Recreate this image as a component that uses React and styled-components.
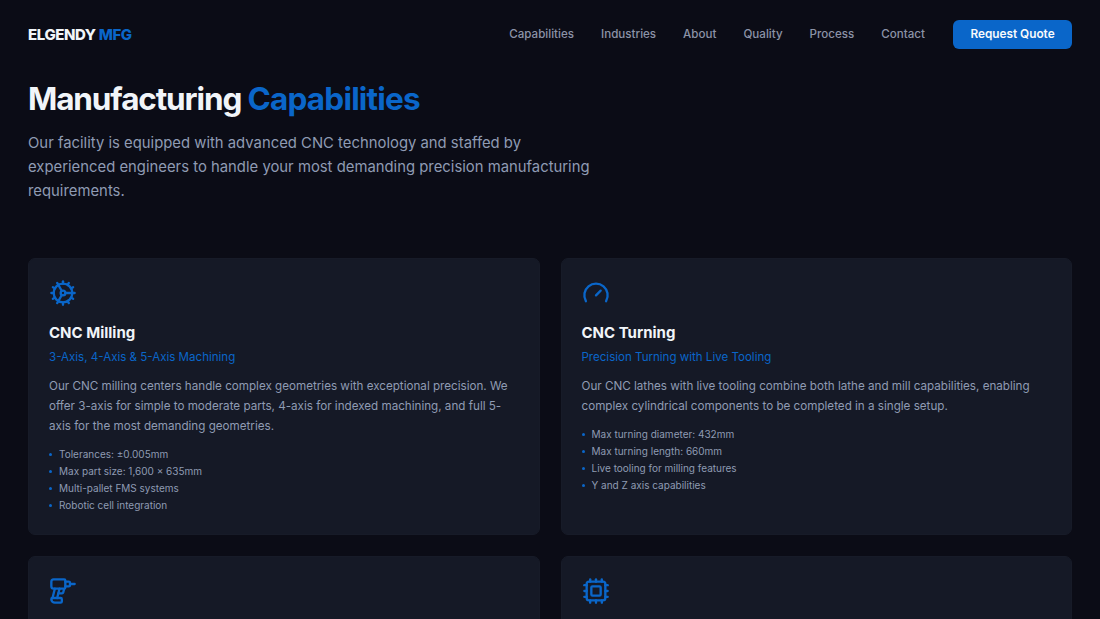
import React from 'react';
import styled, { createGlobalStyle } from 'styled-components';
import { Cog, Gauge, Drill, Cpu } from 'lucide-react';

const GlobalStyle = createGlobalStyle`
  html, body {
    margin: 0;
    height: 100%;
    overflow: hidden;
    background: #0b0c16;
  }
  body {
    font-family: Inter, "Liberation Sans", sans-serif;
    color: #94a3b8;
  }
`;

const Page = styled.div`
  padding: 0 28px;
`;

const Header = styled.header`
  display: flex;
  align-items: center;
  justify-content: space-between;
  height: 68px;
`;

const Logo = styled.div`
  font-size: 15px;
  font-weight: 800;
  letter-spacing: -0.4px;
  color: #f1f5f9;

  span {
    color: #0a66c9;
  }
`;

const Nav = styled.nav`
  display: flex;
  align-items: center;
  gap: 27px;
`;

const NavLink = styled.a`
  font-size: 11.6px;
  font-weight: 500;
  color: #8b93a7;
`;

const QuoteButton = styled.button`
  margin-left: 1px;
  height: 29px;
  width: 119px;
  border: 0;
  border-radius: 6px;
  background: #0a66c9;
  color: #f8fafc;
  font-family: inherit;
  font-size: 11.8px;
  font-weight: 600;
`;

const Hero = styled.section`
  margin-bottom: 55px;
`;

const Title = styled.h1`
  margin: 10px 0 11px;
  font-size: 31.5px;
  line-height: 42px;
  font-weight: 700;
  letter-spacing: -1.13px;
  color: #f1f5f9;

  span {
    letter-spacing: -0.8px;
    color: #0a66c9;
  }
`;

const Lead = styled.p`
  margin: 0;
  max-width: 570px;
  font-size: 14.85px;
  line-height: 24px;
  color: #8f9bb3;
`;

const CardGrid = styled.div`
  display: grid;
  grid-template-columns: 1fr 1fr;
  gap: 21px;
`;

const Card = styled.article`
  box-sizing: border-box;
  min-height: 277px;
  padding: 20px;
  border: 1px solid #171b28;
  border-radius: 7px;
  background: #151926;
`;

const IconWrap = styled.div`
  height: 28px;
  margin-bottom: 15px;
  color: #0a66c9;

  svg {
    display: block;
    width: 28px;
    height: 28px;
  }
`;

const CardTitle = styled.h3`
  margin: 0 0 5px;
  font-size: 15px;
  line-height: 21px;
  font-weight: 700;
  color: #f1f5f9;
`;

const Subtitle = styled.div`
  margin-bottom: 10px;
  font-size: 11.55px;
  line-height: 18px;
  font-weight: 400;
  color: #0a66c9;
`;

const Description = styled.p`
  margin: 0 0 10px;
  font-size: 11.65px;
  line-height: 20px;
  color: #8f9bb3;
`;

const Specs = styled.ul`
  margin: 0;
  padding: 0;
  list-style: none;
`;

const Spec = styled.li`
  position: relative;
  padding-left: 10px;
  font-size: 10px;
  line-height: 17px;
  color: #8f9bb3;

  &::before {
    content: '';
    position: absolute;
    left: 0;
    top: 7px;
    width: 3px;
    height: 3px;
    border-radius: 50%;
    background: #0a66c9;
  }
`;

const navItems = ['Capabilities', 'Industries', 'About', 'Quality', 'Process', 'Contact'];

const cards = [
  {
    icon: <Cog />,
    title: 'CNC Milling',
    subtitle: '3-Axis, 4-Axis & 5-Axis Machining',
    text: 'Our CNC milling centers handle complex geometries with exceptional precision. We offer 3-axis for simple to moderate parts, 4-axis for indexed machining, and full 5-axis for the most demanding geometries.',
    specs: ['Tolerances: ±0.005mm', 'Max part size: 1,600 × 635mm', 'Multi-pallet FMS systems', 'Robotic cell integration'],
  },
  {
    icon: <Gauge />,
    title: 'CNC Turning',
    subtitle: 'Precision Turning with Live Tooling',
    text: 'Our CNC lathes with live tooling combine both lathe and mill capabilities, enabling complex cylindrical components to be completed in a single setup.',
    specs: ['Max turning diameter: 432mm', 'Max turning length: 660mm', 'Live tooling for milling features', 'Y and Z axis capabilities'],
  },
  { icon: <Drill /> },
  { icon: <Cpu /> },
];

const App = () => (
  <Page>
    <GlobalStyle />
    <Header>
      <Logo>
        ELGENDY <span>MFG</span>
      </Logo>
      <Nav>
        {navItems.map((item) => (
          <NavLink key={item}>{item}</NavLink>
        ))}
        <QuoteButton>Request Quote</QuoteButton>
      </Nav>
    </Header>
    <Hero>
      <Title>
        Manufacturing <span>Capabilities</span>
      </Title>
      <Lead>
        Our facility is equipped with advanced CNC technology and staffed by experienced engineers to handle your most demanding precision manufacturing requirements.
      </Lead>
    </Hero>
    <CardGrid>
      {cards.map((card, i) => (
        <Card key={i}>
          <IconWrap>{card.icon}</IconWrap>
          {card.title && <CardTitle>{card.title}</CardTitle>}
          {card.subtitle && <Subtitle>{card.subtitle}</Subtitle>}
          {card.text && <Description>{card.text}</Description>}
          {card.specs && (
            <Specs>
              {card.specs.map((spec) => (
                <Spec key={spec}>{spec}</Spec>
              ))}
            </Specs>
          )}
        </Card>
      ))}
    </CardGrid>
  </Page>
);

export default App;
